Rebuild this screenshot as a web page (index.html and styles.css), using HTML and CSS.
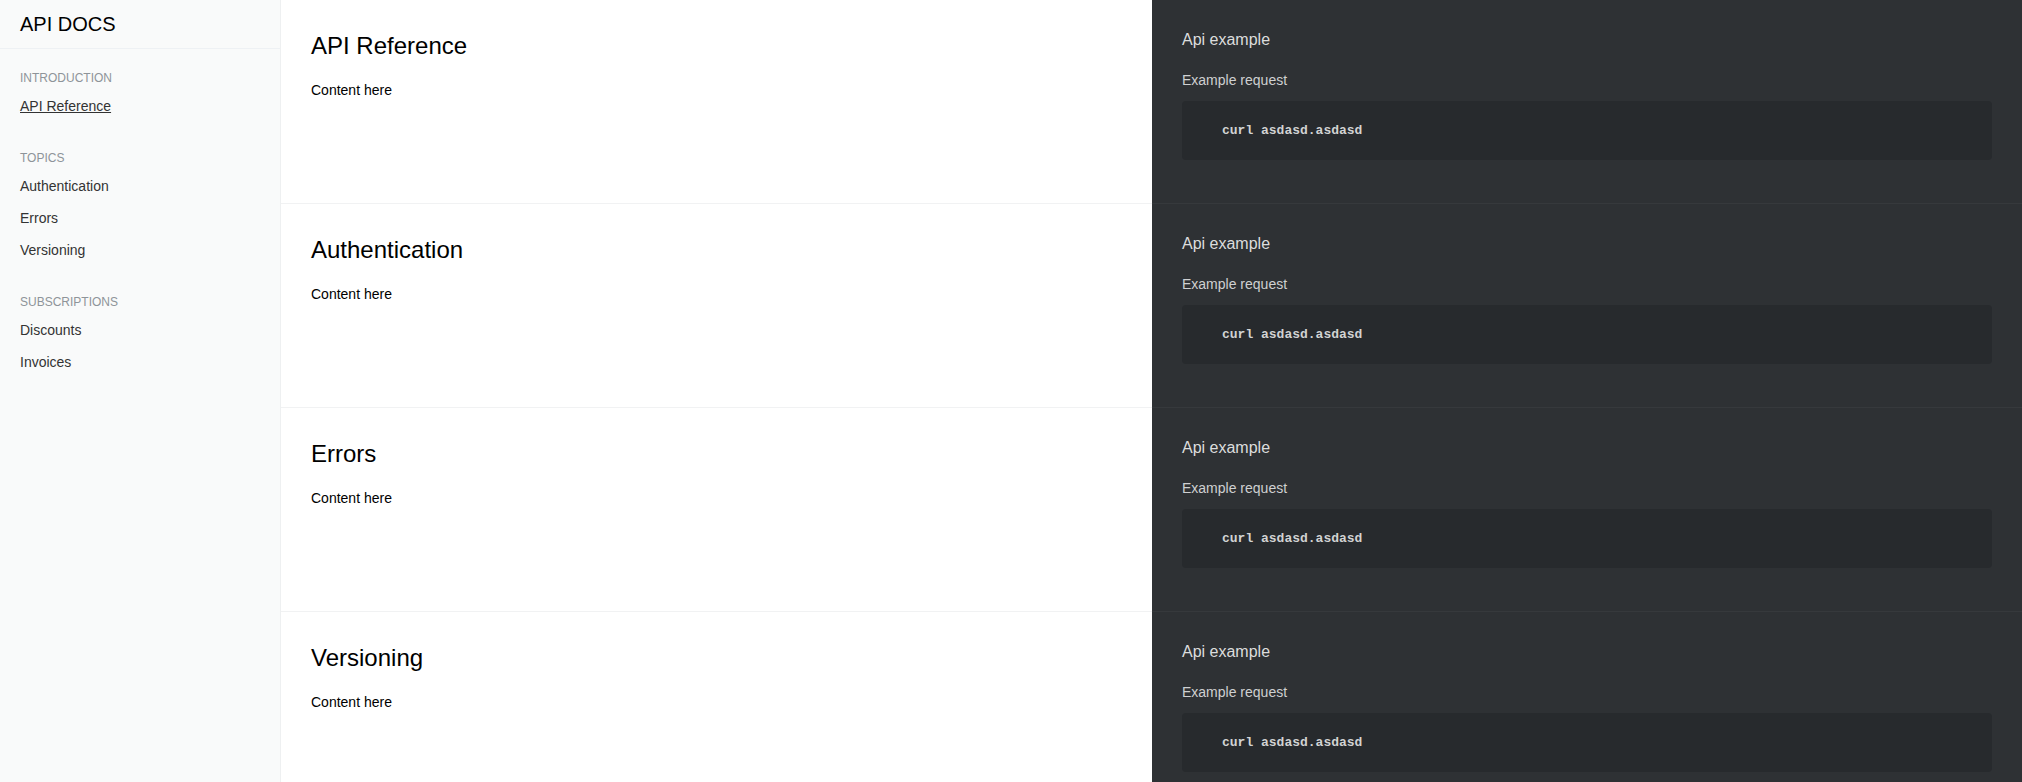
FILE: index.html
```html
<!DOCTYPE html>
<html lang="en">
<head>
<meta charset="utf-8">
<title>API DOCS</title>
<link rel="stylesheet" href="styles.css">
</head>
<body>
<div class="layout">
  <aside class="sidebar">
    <div class="brand">API DOCS</div>
    <nav class="nav">
      <div class="nav-group">
        <div class="nav-heading">INTRODUCTION</div>
        <a class="nav-item active" href="#api-reference">API Reference</a>
      </div>
      <div class="nav-group">
        <div class="nav-heading">TOPICS</div>
        <a class="nav-item" href="#authentication">Authentication</a>
        <a class="nav-item" href="#errors">Errors</a>
        <a class="nav-item" href="#versioning">Versioning</a>
      </div>
      <div class="nav-group">
        <div class="nav-heading">SUBSCRIPTIONS</div>
        <a class="nav-item" href="#discounts">Discounts</a>
        <a class="nav-item" href="#invoices">Invoices</a>
      </div>
    </nav>
  </aside>
  <main class="main">
    <section class="section" id="api-reference">
      <div class="doc">
        <h2 class="doc-title">API Reference</h2>
        <p class="doc-text">Content here</p>
      </div>
      <div class="example">
        <h3 class="example-title">Api example</h3>
        <div class="example-label">Example request</div>
        <pre class="code">curl asdasd.asdasd</pre>
      </div>
    </section>
    <section class="section" id="authentication">
      <div class="doc">
        <h2 class="doc-title">Authentication</h2>
        <p class="doc-text">Content here</p>
      </div>
      <div class="example">
        <h3 class="example-title">Api example</h3>
        <div class="example-label">Example request</div>
        <pre class="code">curl asdasd.asdasd</pre>
      </div>
    </section>
    <section class="section" id="errors">
      <div class="doc">
        <h2 class="doc-title">Errors</h2>
        <p class="doc-text">Content here</p>
      </div>
      <div class="example">
        <h3 class="example-title">Api example</h3>
        <div class="example-label">Example request</div>
        <pre class="code">curl asdasd.asdasd</pre>
      </div>
    </section>
    <section class="section" id="versioning">
      <div class="doc">
        <h2 class="doc-title">Versioning</h2>
        <p class="doc-text">Content here</p>
      </div>
      <div class="example">
        <h3 class="example-title">Api example</h3>
        <div class="example-label">Example request</div>
        <pre class="code">curl asdasd.asdasd</pre>
      </div>
    </section>
  </main>
</div>
</body>
</html>
```

FILE: styles.css
```css
* { box-sizing: border-box; }

html, body {
  margin: 0;
  padding: 0;
  height: 782px;
  overflow: hidden;
}

body {
  font-family: "Liberation Sans", Arial, Helvetica, sans-serif;
  color: #000;
  background: #fff;
}

.layout {
  display: flex;
  height: 782px;
  overflow: hidden;
}

/* Sidebar */
.sidebar {
  width: 281px;
  flex: 0 0 281px;
  background: #f9fafa;
  border-right: 1px solid #eef0f1;
}

.brand {
  height: 49px;
  padding: 12px 20px;
  font-size: 20px;
  line-height: 24px;
  color: #000;
  border-bottom: 1px solid #eef1f4;
}

.nav {
  padding: 21px 20px 0;
}

.nav-group + .nav-group {
  margin-top: 28px;
}

.nav-heading {
  font-size: 12px;
  line-height: 16px;
  color: #8e9499;
  margin-bottom: 4px;
}

.nav-item {
  display: block;
  padding: 6px 0;
  font-size: 14px;
  line-height: 20px;
  color: #333;
  text-decoration: none;
}

.nav-item.active {
  text-decoration: underline;
}

/* Main */
.main {
  flex: 1;
  display: flex;
  flex-direction: column;
}

.section {
  display: flex;
  height: 204px;
  flex: 0 0 204px;
}

.doc {
  flex: 1;
  padding: 31px 30px 0;
  border-bottom: 1px solid #f1f2f3;
}

.doc-title {
  margin: 0;
  font-size: 24px;
  line-height: 29px;
  font-weight: normal;
  color: #000;
}

.doc-text {
  margin: 20px 0 0;
  font-size: 14px;
  line-height: 20px;
  color: #000;
}

.example {
  width: 870px;
  flex: 0 0 870px;
  background: #2e3134;
  padding: 30px 30px 0;
  border-bottom: 1px solid #36393c;
}

.example-title {
  margin: 0;
  font-size: 16px;
  line-height: 20px;
  font-weight: normal;
  color: #dcdddd;
}

.example-label {
  margin-top: 20px;
  font-size: 14px;
  line-height: 20px;
  color: #cfd0d1;
}

.code {
  margin: 11px 0 0;
  height: 59px;
  padding: 20px 40px;
  background: #272a2d;
  border-radius: 4px;
  font-family: "Liberation Mono", "Courier New", monospace;
  font-weight: bold;
  font-size: 13px;
  line-height: 19px;
  color: #d2d3d3;
}
```
